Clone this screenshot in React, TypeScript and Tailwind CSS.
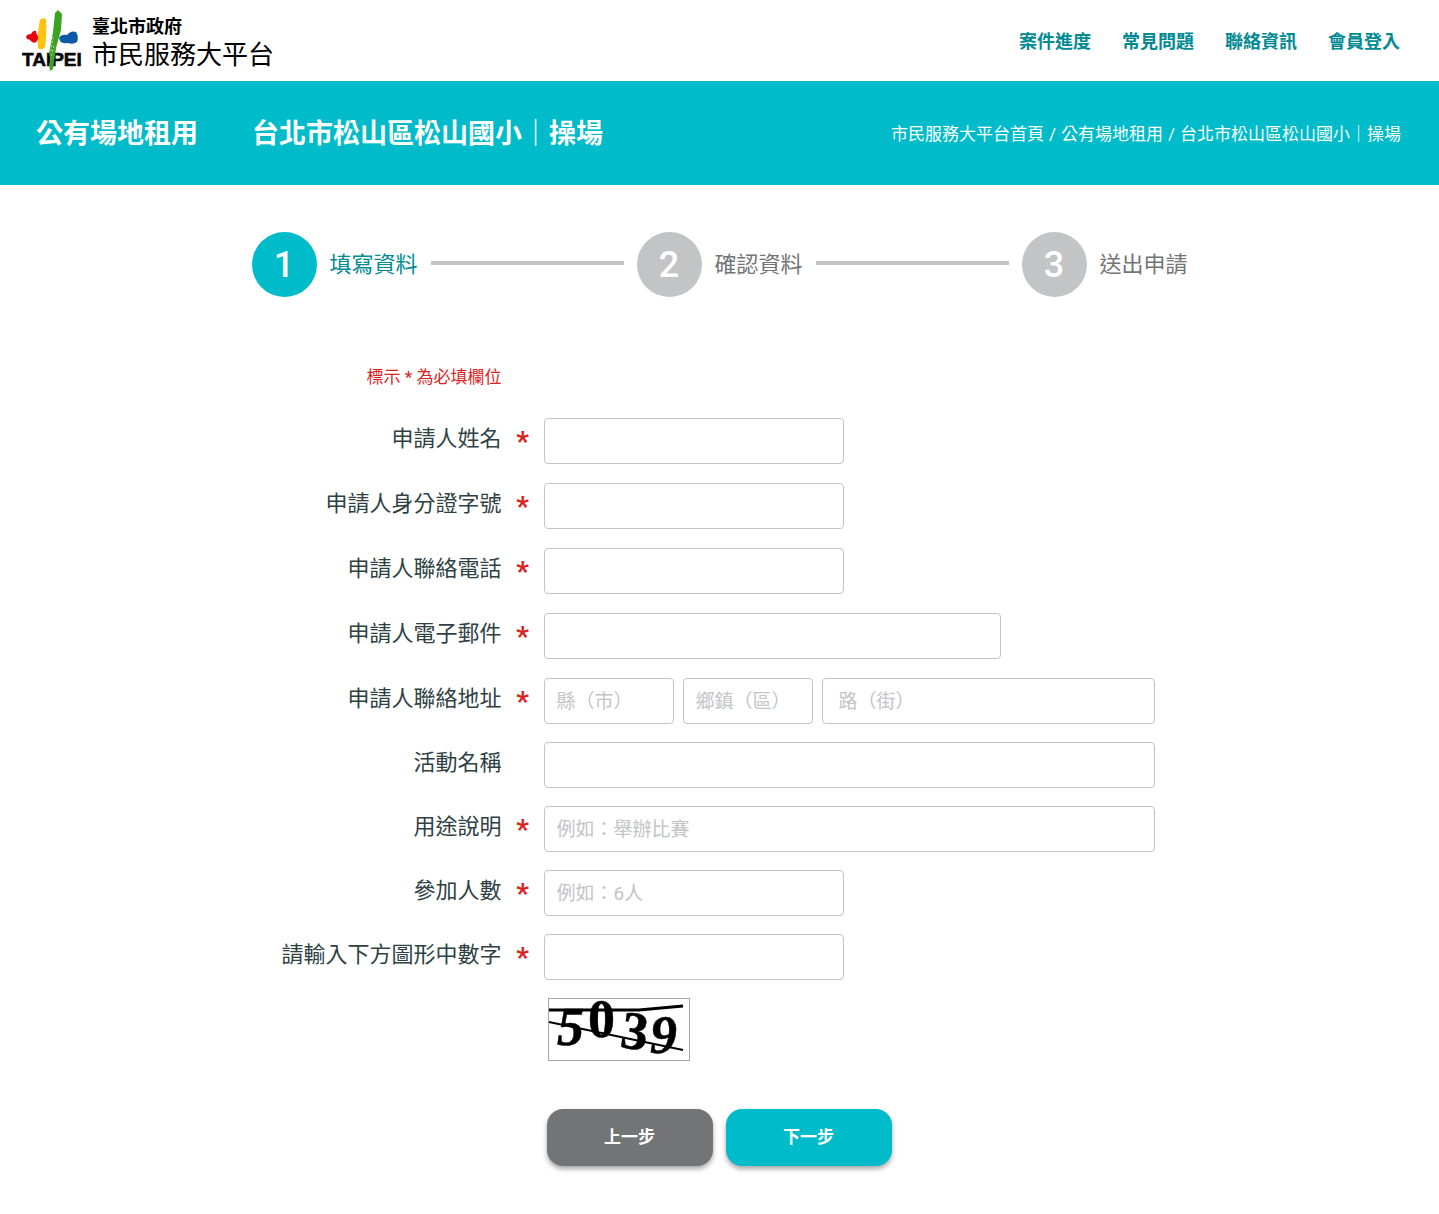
import React, { useState } from "react";
import clsx from "clsx";

interface Step {
  id: number;
  label: string;
}

interface FieldRowProps {
  id: string;
  label: string;
  required?: boolean;
  children: React.ReactNode;
}

interface TextFieldProps extends React.InputHTMLAttributes<HTMLInputElement> {
  className?: string;
}

const navLinks = ["案件進度", "常見問題", "聯絡資訊", "會員登入"];

const steps: Step[] = [
  { id: 1, label: "填寫資料" },
  { id: 2, label: "確認資料" },
  { id: 3, label: "送出申請" },
];

function TaipeiLogo() {
  return (
    <svg
      width="60"
      height="62"
      viewBox="0 0 60 62"
      className="shrink-0"
      role="img"
      aria-label="TAIPEI"
    >
      <path
        d="M4 26 Q6 24 9 24 Q11 20 14 21 Q14 24 16 26 Q17 29 15 31 Q13 34 10 32 Q8 29 5 29 Z"
        fill="#e8000f"
      />
      <path
        d="M18 10 Q20 7 24 9 Q25 24 23 37 Q20 41 16 38 Q15 24 18 10 Z"
        fill="#ffc20e"
      />
      <path
        d="M37 28 Q39 24 45 25 Q49 20 54 22 Q57 27 55 32 Q51 35 46 33 Q40 34 38 31 Z"
        fill="#0f5aa6"
      />
      <text
        x="0"
        y="56"
        fontFamily="Liberation Sans, Arial, sans-serif"
        fontWeight="700"
        fontSize="19"
        fill="#0a0a0a"
        stroke="#0a0a0a"
        strokeWidth="0.6"
      >
        TAIPEI
      </text>
      <path
        d="M33 3 L36 0 L40 4 L39 20 L34 38 L31 59 L28 61 L27 54 L29 50 L27 44 L31 22 Z"
        fill="#3aa321"
      />
      <path
        d="M31 27 L29 41 M32 36 L29 48"
        stroke="#b5dba9"
        strokeWidth="1"
        strokeDasharray="2 2"
      />
    </svg>
  );
}

function Captcha() {
  return (
    <div className="h-[63px] w-[142px] border border-[#a6a6a6]">
      <svg
        width="140"
        height="61"
        viewBox="0 0 140 61"
        className="overflow-visible"
        role="img"
        aria-label="圖形驗證碼"
      >
        <path d="M0 11 H90 L134 7" stroke="#000" strokeWidth="3" fill="none" />
        <path d="M0 23 L134 51" stroke="#000" strokeWidth="2" />
        <g
          fontFamily="Liberation Serif, serif"
          fontWeight="700"
          fontSize="54"
          fill="#000"
          stroke="#000"
          strokeWidth="0.5"
        >
          <text x="8" y="46" fontStyle="italic">5</text>
          <text x="39" y="38">0</text>
          <text x="70" y="48" rotate="8">3</text>
          <text x="101" y="54" fontStyle="italic">9</text>
        </g>
      </svg>
    </div>
  );
}

function TextField({ className, ...props }: TextFieldProps) {
  return (
    <input
      type="text"
      className={clsx(
        "h-[46px] min-w-0 rounded-[4px] border border-[#c3c4c6] bg-white px-3 text-[19px] text-[#2f4144] outline-none placeholder:text-[#c3c4c6] focus:border-[#00bcca]",
        className
      )}
      {...props}
    />
  );
}

function FieldRow({ id, label, required, children }: FieldRowProps) {
  return (
    <div className="flex items-center">
      <label
        htmlFor={id}
        className="w-[250px] shrink-0 pb-1 text-right text-[22px] leading-7 text-[#2f4144]"
      >
        {label}
      </label>
      <span className="w-[42px] shrink-0 pt-0.5 text-center text-[28px] leading-7 font-bold text-[#dc1f1f]">
        {required && "*"}
      </span>
      <div className="flex min-w-0 flex-1 gap-[9px]">{children}</div>
    </div>
  );
}

export default function App() {
  const [currentStep] = useState(1);

  return (
    <div className="bg-white font-['Roboto','Noto_Sans_CJK_TC',sans-serif]">
      {/* Header */}
      <header className="flex h-[81px] items-center justify-between pr-[39px] pl-[22px]">
        <a href="#" className="flex items-center gap-[10px] text-black">
          <TaipeiLogo />
          <span className="pt-1">
            <span className="block text-[18px] leading-6 font-bold">
              臺北市政府
            </span>
            <span className="block text-[26px] leading-8">
              市民服務大平台
            </span>
          </span>
        </a>
        <nav className="flex gap-[31px] pt-0.5">
          {navLinks.map((link) => (
            <a
              key={link}
              href="#"
              className="text-[18px] leading-7 font-bold text-[#008a94]"
            >
              {link}
            </a>
          ))}
        </nav>
      </header>

      {/* Title bar */}
      <div className="flex h-[104px] items-center justify-between bg-[#00bcca] pt-0.5 pr-[38px] pl-9 text-white">
        <div className="flex gap-[54px] text-[27px] leading-9 font-bold">
          <h2>公有場地租用</h2>
          <h1>台北市松山區松山國小｜操場</h1>
        </div>
        <nav className="flex gap-[5px] text-[17px] leading-6">
          <a href="#">市民服務大平台首頁</a>
          <span>/</span>
          <a href="#">公有場地租用</a>
          <span>/</span>
          <span>台北市松山區松山國小｜操場</span>
        </nav>
      </div>

      <main className="mx-auto max-w-[936px] pt-[47px] pb-12">
        {/* Steps */}
        <ol className="flex items-center">
          {steps.map((step, i) => (
            <React.Fragment key={step.id}>
              {i > 0 && (
                <li
                  aria-hidden="true"
                  className="mx-[13px] mb-1 h-1 flex-1 bg-[#c3c4c6]"
                />
              )}
              <li className="flex items-center gap-[13px]">
                <span
                  className={clsx(
                    "flex size-[65px] items-center justify-center rounded-full text-[36px] leading-none font-medium text-white",
                    step.id === currentStep ? "bg-[#00bcca]" : "bg-[#c3c4c6]"
                  )}
                >
                  {step.id}
                </span>
                <span
                  className={clsx(
                    "text-[22px] leading-8",
                    step.id === currentStep
                      ? "text-[#008a94]"
                      : "text-[#727476]"
                  )}
                >
                  {step.label}
                </span>
              </li>
            </React.Fragment>
          ))}
        </ol>

        {/* Form */}
        <form className="mt-[68px]" onSubmit={(e) => e.preventDefault()}>
          <p className="w-[250px] text-right text-[17px] leading-6 text-[#dc1f1f]">
            標示 <span className="font-medium">*</span> 為必填欄位
          </p>

          <div className="mt-[29px] flex flex-col gap-[19px]">
            <FieldRow id="name" label="申請人姓名" required>
              <TextField id="name" className="w-[300px]" />
            </FieldRow>
            <FieldRow id="idNumber" label="申請人身分證字號" required>
              <TextField id="idNumber" className="w-[300px]" />
            </FieldRow>
            <FieldRow id="phone" label="申請人聯絡電話" required>
              <TextField id="phone" type="tel" className="w-[300px]" />
            </FieldRow>
            <FieldRow id="email" label="申請人電子郵件" required>
              <TextField id="email" type="email" className="w-[457px]" />
            </FieldRow>
            <FieldRow id="city" label="申請人聯絡地址" required>
              <TextField
                id="city"
                placeholder="縣（市）"
                className="w-[130px]"
              />
              <TextField
                aria-label="鄉鎮（區）"
                placeholder="鄉鎮（區）"
                className="w-[130px]"
              />
              <TextField
                aria-label="路（街）"
                placeholder="路（街）"
                className="mr-[33px] flex-1 px-4"
              />
            </FieldRow>
          </div>

          <div className="mt-[18px] flex flex-col gap-[18px]">
            <FieldRow id="event" label="活動名稱">
              <TextField id="event" className="mr-[33px] flex-1" />
            </FieldRow>
            <FieldRow id="purpose" label="用途說明" required>
              <TextField
                id="purpose"
                placeholder="例如：舉辦比賽"
                className="mr-[33px] flex-1"
              />
            </FieldRow>
            <FieldRow id="people" label="參加人數" required>
              <TextField
                id="people"
                placeholder="例如：6人"
                className="w-[300px]"
              />
            </FieldRow>
            <FieldRow id="captcha" label="請輸入下方圖形中數字" required>
              <TextField id="captcha" className="w-[300px]" />
            </FieldRow>
          </div>

          <div className="mt-[18px] pl-[296px]">
            <Captcha />
          </div>

          <div className="mt-12 flex gap-[13px] pl-[295px]">
            <button
              type="button"
              className="h-[57px] w-[166px] rounded-[16px] bg-[#727476] text-[17px] font-bold text-white shadow-[0_3px_5px_rgba(0,0,0,0.35)]"
            >
              上一步
            </button>
            <button
              type="submit"
              className="h-[57px] w-[166px] rounded-[16px] bg-[#00bcca] text-[17px] font-bold text-white shadow-[0_3px_5px_rgba(0,0,0,0.35)]"
            >
              下一步
            </button>
          </div>
        </form>
      </main>
    </div>
  );
}
